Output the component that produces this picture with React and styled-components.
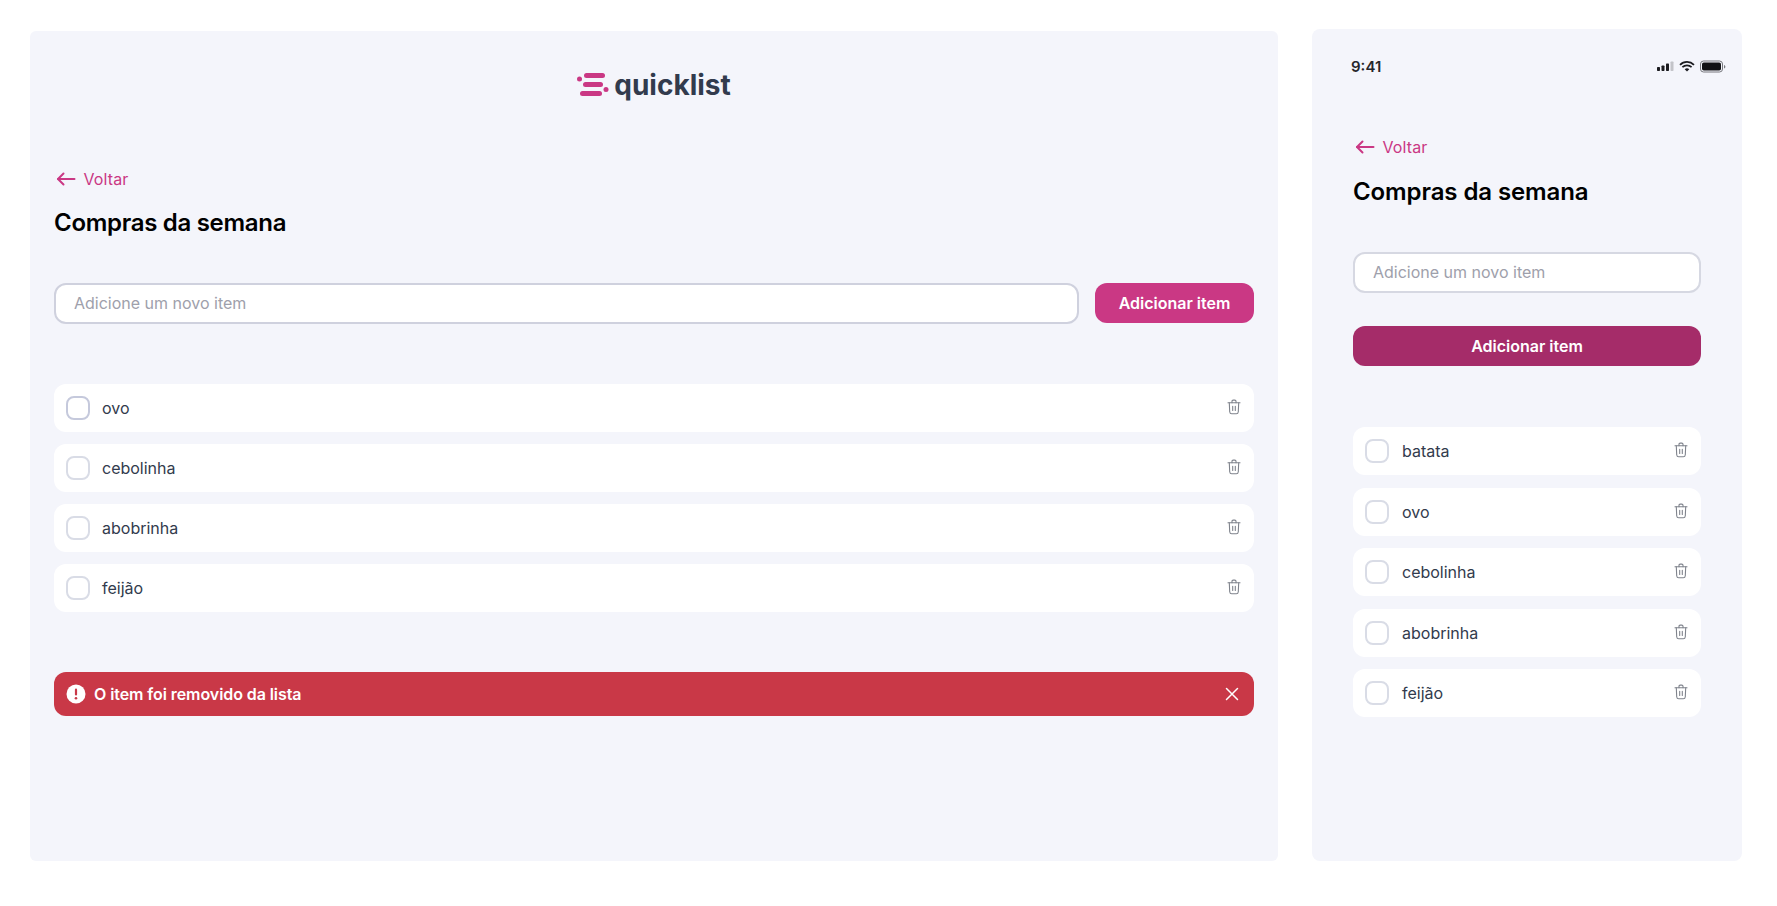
import React from 'react';
import styled, { createGlobalStyle } from 'styled-components';

const GlobalStyle = createGlobalStyle`
  * { box-sizing: border-box; }
  body {
    margin: 0;
    background: #ffffff;
    font-family: Inter, "Liberation Sans", sans-serif;
  }
`;

const LogoMark = () => (
  <svg width="32" height="26" viewBox="0 0 32 26" fill="#ca3884">
    <rect x="7" y="1" width="21" height="5" rx="2.5" />
    <rect x="6" y="10" width="20" height="5" rx="2.5" />
    <rect x="3" y="19" width="22" height="5" rx="2.5" />
    <circle cx="2.5" cy="7" r="2.5" />
    <circle cx="29" cy="17.5" r="2.5" />
  </svg>
);

const BackArrow = () => (
  <svg width="20" height="14" viewBox="0 0 20 14" fill="none" stroke="#ca3884" strokeWidth="2" strokeLinecap="round" strokeLinejoin="round">
    <path d="M18.5 7H2" />
    <path d="M7.5 1.5 2 7l5.5 5.5" />
  </svg>
);

const TrashIcon = () => (
  <svg width="14" height="16" viewBox="0 0 14 16" fill="none" stroke="#7f838c" strokeWidth="1.1" strokeLinecap="round" strokeLinejoin="round">
    <path d="M1 3.7h12" />
    <path d="M5 3.7V2.300c0-.7.5-1.200 1.200-1.200h1.600c.7 0 1.200.5 1.200 1.200v1.400" />
    <path d="M2.300 3.700l.4 9c.1 1.100.9 2 2 2h4.600c1.100 0 1.900-.9 2-2l.4-9" />
    <path d="M5.700 7.200v4.200M8.300 7.200v4.200" />
  </svg>
);

const AlertIcon = () => (
  <svg width="20" height="20" viewBox="0 0 20 20">
    <circle cx="10" cy="10" r="9.5" fill="#ffffff" />
    <rect x="8.9" y="4.6" width="2.2" height="7" rx="1.1" fill="#c93847" />
    <circle cx="10" cy="14.2" r="1.3" fill="#c93847" />
  </svg>
);

const CloseIcon = () => (
  <svg width="14" height="14" viewBox="0 0 14 14" fill="none" stroke="#ffffff" strokeWidth="1.5" strokeLinecap="round">
    <path d="M1.5 1.5l11 11M12.5 1.5l-11 11" />
  </svg>
);

const StatusIcons = () => (
  <svg width="69" height="13" viewBox="0 0 69 13">
    <rect x="0" y="7" width="3" height="4" rx="0.7" fill="#1b1b1f" />
    <rect x="4.5" y="5.5" width="3" height="5.5" rx="0.7" fill="#1b1b1f" />
    <rect x="9" y="3.5" width="3" height="7.5" rx="0.7" fill="#1b1b1f" />
    <rect x="13.5" y="1.5" width="3" height="9.5" rx="0.7" fill="#c3c4c9" />
    <path d="M23 4.8a10 10 0 0 1 14 0M25.4 7.2a6.6 6.6 0 0 1 9.2 0" fill="none" stroke="#1b1b1f" strokeWidth="1.7" />
    <path d="M27.700 9.200a3.400 3.400 0 0 1 4.600 0L30 11.600z" fill="#1b1b1f" />
    <rect x="43.5" y="1" width="22" height="11" rx="3" fill="none" stroke="#76777c" strokeWidth="1" />
    <rect x="45" y="2.5" width="19" height="8" rx="1.8" fill="#111114" />
    <path d="M67 5v3.400c.8-.3 1.400-1 1.400-1.700S67.800 5.300 67 5z" fill="#76777c" />
  </svg>
);

const Page = styled.div`
  display: flex;
  align-items: flex-end;
  gap: 34px;
  width: 1777px;
  height: 861px;
  padding-left: 30px;
`;

const DesktopPanel = styled.main`
  width: 1248px;
  height: 830px;
  background: #f4f5fb;
  border-radius: 6px;
  padding: 37px 24px 0;
`;

const MobilePanel = styled.aside`
  width: 430px;
  height: 832px;
  background: #f4f5fb;
  border-radius: 8px;
  padding: 28px 41px 0;
`;

const LogoRow = styled.header`
  display: flex;
  justify-content: center;
  align-items: center;
  gap: 5px;
  height: 34px;
  margin-bottom: 67px;
`;

const LogoText = styled.span`
  font-size: 28px;
  font-weight: 700;
  color: #323b4d;
  line-height: 34px;
`;

const StatusBar = styled.div`
  display: flex;
  justify-content: space-between;
  align-items: center;
  height: 18px;
  margin: 0 -25px 62px -2px;
`;

const Clock = styled.span`
  font-size: 15px;
  font-weight: 600;
  color: #26262a;
`;

const BackLink = styled.a`
  display: flex;
  align-items: center;
  gap: 7.5px;
  height: 20px;
  padding-left: 2px;
  font-size: 16px;
  letter-spacing: 0.1px;
  line-height: 20px;
  color: #ca3884;
`;

const Title = styled.h1`
  margin: ${(p) => (p.$stacked ? '20px' : '19px')} 0 0;
  font-size: 24px;
  line-height: 30px;
  font-weight: 600;
  letter-spacing: ${(p) => (p.$stacked ? '-0.1px' : '-0.3px')};
  color: #000000;
`;

const Form = styled.form`
  display: flex;
  flex-direction: ${(p) => (p.$stacked ? 'column' : 'row')};
  gap: ${(p) => (p.$stacked ? '33px' : '16px')};
  margin-top: 45px;
`;

const Input = styled.input`
  flex: ${(p) => (p.$stacked ? '0 0 41px' : '1')};
  min-width: 0;
  height: 41px;
  padding: 0 18px 2px;
  font: 400 16px Inter, sans-serif;
  color: #323b4d;
  background: #ffffff;
  border: 2px solid ${(p) => (p.$stacked ? '#d6d8e2' : '#cfd1de')};
  border-radius: 12px;
  outline: none;

  &::placeholder {
    color: #9ea0ab;
    opacity: 1;
  }
`;

const AddButton = styled.button`
  flex: none;
  width: ${(p) => (p.$stacked ? '100%' : '159px')};
  height: 40px;
  padding: 0;
  font: 600 16px Inter, sans-serif;
  color: #ffffff;
  background: ${(p) => (p.$stacked ? '#a52c69' : '#ca3884')};
  border: none;
  border-radius: 12px;
`;

const List = styled.ul`
  display: flex;
  flex-direction: column;
  gap: ${(p) => (p.$stacked ? '12.5px' : '12px')};
  list-style: none;
  margin: ${(p) => (p.$stacked ? '61px' : '60px')} 0 0;
  padding: 0;
`;

const Item = styled.li`
  display: flex;
  align-items: center;
  height: 48px;
  padding: 0 13px 0 12px;
  background: #ffffff;
  border-radius: 12px;
`;

const CheckBox = styled.span`
  flex: none;
  width: 24px;
  height: 24px;
  border: 2px solid ${(p) => (p.$hover ? '#c5c9dc' : '#d9dce6')};
  border-radius: 8px;
  background: #ffffff;
`;

const ItemName = styled.span`
  flex: 1;
  margin-left: ${(p) => (p.$stacked ? '13px' : '12px')};
  font-size: 16px;
  color: #323b4d;
`;

const IconButton = styled.button`
  display: flex;
  padding: 0;
  background: none;
  border: none;
`;

const TrashButton = styled(IconButton)`
  margin-top: -2px;
`;

const Toast = styled.div`
  display: flex;
  align-items: center;
  gap: 8px;
  height: 44px;
  margin-top: 60px;
  padding: 0 15px 0 12px;
  font-size: 16px;
  font-weight: 600;
  letter-spacing: -0.08px;
  color: #ffffff;
  background: #c93847;
  border-radius: 12px;
`;

const ToastText = styled.span`
  flex: 1;
`;

const desktopItems = ['ovo', 'cebolinha', 'abobrinha', 'feijão'];
const mobileItems = ['batata', 'ovo', 'cebolinha', 'abobrinha', 'feijão'];

const ItemList = ({ items, stacked }) => (
  <List $stacked={stacked}>
    {items.map((name, i) => (
      <Item key={name}>
        <CheckBox $hover={!stacked && i === 0} />
        <ItemName $stacked={stacked}>{name}</ItemName>
        <TrashButton type="button"><TrashIcon /></TrashButton>
      </Item>
    ))}
  </List>
);

export default function App() {
  return (
    <>
      <GlobalStyle />
      <Page>
        <DesktopPanel>
          <LogoRow>
            <LogoMark />
            <LogoText>quicklist</LogoText>
          </LogoRow>
          <BackLink><BackArrow />Voltar</BackLink>
          <Title>Compras da semana</Title>
          <Form>
            <Input placeholder="Adicione um novo item" />
            <AddButton type="button">Adicionar item</AddButton>
          </Form>
          <ItemList items={desktopItems} />
          <Toast>
            <AlertIcon />
            <ToastText>O item foi removido da lista</ToastText>
            <IconButton type="button"><CloseIcon /></IconButton>
          </Toast>
        </DesktopPanel>
        <MobilePanel>
          <StatusBar>
            <Clock>9:41</Clock>
            <StatusIcons />
          </StatusBar>
          <BackLink><BackArrow />Voltar</BackLink>
          <Title $stacked>Compras da semana</Title>
          <Form $stacked>
            <Input $stacked placeholder="Adicione um novo item" />
            <AddButton $stacked type="button">Adicionar item</AddButton>
          </Form>
          <ItemList items={mobileItems} stacked />
        </MobilePanel>
      </Page>
    </>
  );
}
